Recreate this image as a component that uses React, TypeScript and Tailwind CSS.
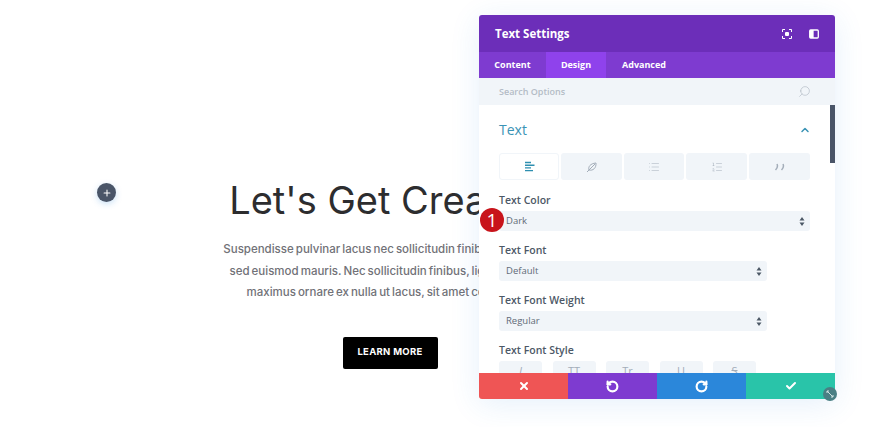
import { Check, ChevronUp, List, ListOrdered, Plus, RotateCcw, RotateCw, Search, X } from 'lucide-react'

const TEXT_TABS = ['w-[60px]', 'w-[61px]', 'w-[60px]', 'w-[61px]', 'w-[61px]']
const STYLE_BUTTONS = ['I', 'TT', 'Tr', 'U', 'S']

function AlignIcon() {
  return (
    <svg width="11" height="11" viewBox="0 0 11 11" className="text-[#2e8fb0]">
      <path d="M1 1.500h6M1 4.200h9.500M1 6.900h6M1 9.600h8" stroke="currentColor" strokeWidth="1.400" fill="none" />
    </svg>
  )
}

function SlashedDrop() {
  return (
    <svg width="12" height="12" viewBox="0 0 12 12" fill="none" stroke="#a3adb9" strokeWidth="1">
      <path d="M3 9c-1-3 1-6.500 7-7 .4 5-3 8-7 7z" />
      <path d="M1 11 9 3" />
    </svg>
  )
}

function QuoteIcon() {
  return (
    <svg width="11" height="8" viewBox="0 0 11 8" fill="none" stroke="#a3adb9" strokeWidth="1.500">
      <path d="M3 1c1 2.200.6 4-1.500 6M9 1c1 2.200.6 4-1.500 6" />
    </svg>
  )
}

function Field({ label, value, wide }: { label: string; value: string; wide?: boolean }) {
  return (
    <div className="flex flex-col">
      <label className="text-[10.500px] leading-[15px] font-semibold text-[#4c5866]">{label}</label>
      <div className={`mt-[3px] h-5 flex items-center justify-between rounded-[3px] bg-[#f1f5f9] pl-[7px] pr-[5px] ${wide ? 'w-[311px]' : 'w-[268px]'}`}>
        <span className="text-[9.500px] font-normal text-[#5f6a77]">{value}</span>
        <svg width="6" height="9" viewBox="0 0 6 9" fill="#4c5866">
          <path d="M3 0 5.500 3.500H.5zM3 9 .5 5.500h5z" />
        </svg>
      </div>
    </div>
  )
}

function SettingsPanel() {
  return (
    <div className="absolute left-[479px] top-[15px] w-[356px] h-[384px] flex flex-col rounded-t-[3px] bg-white shadow-[0_5px_30px_rgba(43,135,218,0.12)] font-['Open_Sans',sans-serif]">
      <header className="h-[37px] shrink-0 flex items-center justify-between pl-4 pr-4 rounded-t-[3px] bg-[#6c2eb9]">
        <span className="text-[11.500px] font-bold text-white">Text Settings</span>
        <div className="flex items-center gap-[17px]">
          <svg width="10" height="10" viewBox="0 0 10 10" fill="none" stroke="white" strokeWidth="1">
            <path d="M.5 3V.5H3M7 .5h2.500V3M9.500 7v2.500H7M3 9.500H.5V7" />
            <rect x="3" y="3" width="4" height="4" rx="1" fill="white" stroke="none" />
          </svg>
          <svg width="10" height="10" viewBox="0 0 10 10" fill="none" stroke="white" strokeWidth="1.300">
            <rect x=".7" y="1" width="8.600" height="8" rx="1" />
            <path d="M4 1v8" />
            <path d="M1 1h3v8H1z" fill="white" stroke="none" />
          </svg>
        </div>
      </header>

      <nav className="h-[26px] shrink-0 flex bg-[#7e3bd0] text-[9px] font-bold text-white">
        <span className="w-[67px] flex items-center justify-center">Content</span>
        <span className="w-[60px] flex items-center justify-center bg-[#8f42ec]">Design</span>
        <span className="w-[76px] flex items-center justify-center">Advanced</span>
      </nav>

      <div className="h-[27px] shrink-0 flex items-center justify-between pl-5 pr-6 bg-[#f1f5f9]">
        <span className="pt-[1px] text-[9px] font-semibold text-[#b4bcc6]">Search Options</span>
        <Search size={13} strokeWidth={1} className="text-[#a3adb9] -scale-x-100" />
      </div>

      <div className="relative flex-1 overflow-hidden px-5">
        <div className="absolute right-0 top-0 w-[5px] h-[58px] bg-[#4a5568]" />
        <div className="flex items-center justify-between pr-[4px] pt-[15px]">
          <h3 className="text-[14px] leading-5 text-[#3a93b5]">Text</h3>
          <ChevronUp size={12} strokeWidth={3} className="text-[#3a93b5]" />
        </div>
        <div className="mt-[13px] flex gap-[2px]">
          {TEXT_TABS.map((w, i) => (
            <div
              key={i}
              className={`${w} h-[27px] flex items-center justify-center rounded-[3px] ${i === 0 ? 'bg-white border border-[#f1f5f9]' : 'bg-[#f1f5f9]'}`}
            >
              {i === 0 && <AlignIcon />}
              {i === 1 && <SlashedDrop />}
              {i === 2 && <List size={12} strokeWidth={1} className="text-[#a3adb9]" />}
              {i === 3 && <ListOrdered size={12} strokeWidth={1} className="text-[#a3adb9]" />}
              {i === 4 && <QuoteIcon />}
            </div>
          ))}
        </div>
        <div className="mt-[13px] flex flex-col gap-[12px]">
          <Field label="Text Color" value="Dark" wide />
          <Field label="Text Font" value="Default" />
          <Field label="Text Font Weight" value="Regular" />
          <div className="flex flex-col">
            <label className="text-[10.500px] leading-[15px] font-semibold text-[#4c5866]">Text Font Style</label>
            <div className="mt-[3px] flex gap-[10.500px]">
              {STYLE_BUTTONS.map((b) => (
                <div key={b} className="w-[43px] h-5 pt-[3px] flex justify-center rounded-[3px] bg-[#f1f5f9] text-[11px] leading-[14px] text-[#a3adb9]">
                  <span className={b === 'U' ? 'underline' : b === 'S' ? 'line-through' : b === 'I' ? 'italic' : ''}>{b}</span>
                </div>
              ))}
            </div>
          </div>
        </div>
      </div>

      <footer className="h-[26px] shrink-0 flex rounded-b-[3px] overflow-hidden text-white">
        <button className="flex-1 flex items-center justify-center bg-[#ef5555]"><X size={12} strokeWidth={4} /></button>
        <button className="flex-1 flex items-center justify-center bg-[#7e3bd0]"><RotateCcw size={13} strokeWidth={4} /></button>
        <button className="flex-1 flex items-center justify-center bg-[#2b87da]"><RotateCw size={13} strokeWidth={4} /></button>
        <button className="flex-1 flex items-center justify-center bg-[#29c4a9]"><Check size={12} strokeWidth={4} /></button>
      </footer>

      <div className="absolute right-[-2px] bottom-[-2px] w-[14px] h-[14px] flex items-center justify-center rounded-full bg-[#4a7f84]">
        <svg width="8" height="8" viewBox="0 0 8 8" fill="none" stroke="#cfe3e3" strokeWidth="1">
          <path d="M1 1l6 6M1 1h2M1 1v2M7 7H5M7 7V5" />
        </svg>
      </div>

      <div className="absolute left-[1px] top-[193px] w-6 h-6 flex items-center justify-center rounded-full bg-[#c8141b] text-[19px] leading-none text-white">
        1
      </div>
    </div>
  )
}

export default function App() {
  return (
    <div className="relative w-[880px] h-[427px] overflow-hidden bg-white">
      <div className="w-[780px] pt-[175px] flex flex-col items-center font-['Inter',sans-serif]">
        <h1 className="text-[38px] leading-[50px] font-normal whitespace-nowrap text-[#2d2d2f]">Let's Get Creative</h1>
        <div className="mt-[14px] text-center whitespace-nowrap text-[11.500px] leading-[21.500px] font-medium [word-spacing:-1px] text-[#717177]">
          <p>Suspendisse pulvinar lacus nec sollicitudin finibus, ligula dui a</p>
          <p>sed euismod mauris. Nec sollicitudin finibus, ligula dui sed a</p>
          <p>maximus ornare ex nulla ut lacus, sit amet congue nisi</p>
        </div>
        <a className="mt-[33px] w-[95px] h-[32px] flex items-center justify-center rounded-[2px] bg-black text-[9.500px] font-bold tracking-[0.3px] text-white">
          LEARN MORE
        </a>
      </div>

      <div className="absolute left-[97px] top-[183px] w-[19px] h-[19px] flex items-center justify-center rounded-full bg-[#4a5568] shadow-[0_2px_6px_rgba(43,135,218,0.25)]">
        <Plus size={10} strokeWidth={2.500} className="text-white" />
      </div>

      <SettingsPanel />
    </div>
  )
}
